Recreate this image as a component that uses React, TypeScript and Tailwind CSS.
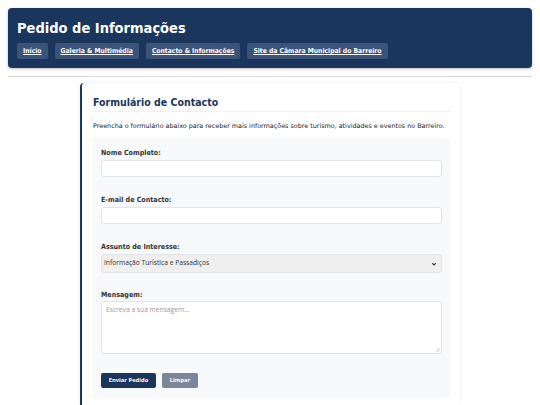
export default function App() {
  const sans = { fontFamily: '"DejaVu Sans Condensed", "DejaVu Sans", Verdana, sans-serif' };
  const body = { fontFamily: '"DejaVu Sans", Verdana, sans-serif' };
  const poppins = { fontFamily: '"Open Sans", sans-serif' };
  const nav = ["Início", "Galeria & Multimédia", "Contacto & Informações", "Site da Câmara Municipal do Barreiro"];
  const label = "block h-[10px] text-[7.1px] leading-[10px] font-bold text-[#333]";
  const field = "block w-full rounded-[3px] border border-[#e1e4e8] bg-white";

  return (
    <div className="h-[405px] overflow-hidden bg-white" style={sans}>
      <div className="p-2">
        <header className="rounded-[4px] bg-[#1b365d] px-[9px] pt-[10px] pb-[9px] text-white shadow-[0_1px_3px_rgba(0,0,0,0.25)]">
          <h1 className="text-[14.5px] leading-[20px] font-bold">Pedido de Informações</h1>
          <nav className="mt-[5px] flex gap-[7px]">
            {nav.map((n) => (
              <a key={n} href="#" className="rounded-[2px] bg-[#3b5379] px-[6px] py-[4px] text-[6.75px] leading-[8px] font-bold text-white underline">
                {n}
              </a>
            ))}
          </nav>
        </header>
        <hr className="mt-[8px] border-t border-[#d9d9d9]" />
      </div>

      <main className="-mt-[2px] ml-[80px] w-[380px] rounded-t-[4px] border-l-[2px] border-[#1b365d] bg-white pt-[12px] pr-[10px] pb-[8px] pl-[11px] shadow-[0_0_4px_rgba(0,0,0,0.08)]">
        <h2 className="border-b border-[#eef0f3] pb-[2px] text-[10.5px] leading-[14px] font-bold text-[#1b365d]">
          Formulário de Contacto
        </h2>
        <p className="mt-[10px] text-[6.4px] leading-[9px] whitespace-nowrap text-[#222]" style={body}>
          Preencha o formulário abaixo para receber mais informações sobre turismo, atividades e eventos no Barreiro.
        </p>

        <form className="mt-[8px] rounded-[4px] bg-[#f7f9fb] px-[8px] pt-[9px] pb-[9px] shadow-[0_0_1px_rgba(0,0,0,0.15)]">
          <label className={label}>Nome Completo:</label>
          <input className={`mt-[2px] h-[17px] ${field}`} />

          <label className={`mt-[18px] ${label}`}>E-mail de Contacto:</label>
          <input className={`mt-[2px] h-[17px] ${field}`} />

          <label className={`mt-[18px] ${label}`}>Assunto de Interesse:</label>
          <div className="mt-[2px] flex h-[19px] w-full items-center justify-between rounded-[3px] border border-[#e1e4e8] bg-[#efefef] pr-[4px] pl-[2px]">
            <span className="text-[6.7px] text-[#333]" style={poppins}>Informação Turística e Passadiços</span>
            <svg width="6" height="6" viewBox="0 0 10 10"><path d="M2 3.5 L5 6.5 L8 3.5" fill="none" stroke="#333" strokeWidth="1.8" /></svg>
          </div>

          <label className={`mt-[17px] ${label}`}>Mensagem:</label>
          <div className="relative mt-[1px] h-[53px] w-full rounded-[3px] border border-[#e1e4e8] bg-white px-[4px] pt-[3px]">
            <span className="block text-[6.7px] leading-[9px] text-[#9a9a9a]" style={poppins}>Escreva a sua mensagem...</span>
            <svg className="absolute right-[1px] bottom-[1px]" width="5" height="5" viewBox="0 0 5 5"><path d="M4.5 1 L1 4.5 M4.5 3 L3 4.5" stroke="#999" strokeWidth="0.6" /></svg>
          </div>

          <div className="mt-[19px] flex gap-[6px]">
            <button type="button" className="h-[15px] w-[55px] rounded-[2px] bg-[#1b365d] text-[5.8px] font-bold text-white" style={poppins}>Enviar Pedido</button>
            <button type="button" className="h-[15px] w-[36px] rounded-[2px] bg-[#7a869a] text-[5.8px] font-bold text-white" style={poppins}>Limpar</button>
          </div>
        </form>
      </main>
    </div>
  );
}
